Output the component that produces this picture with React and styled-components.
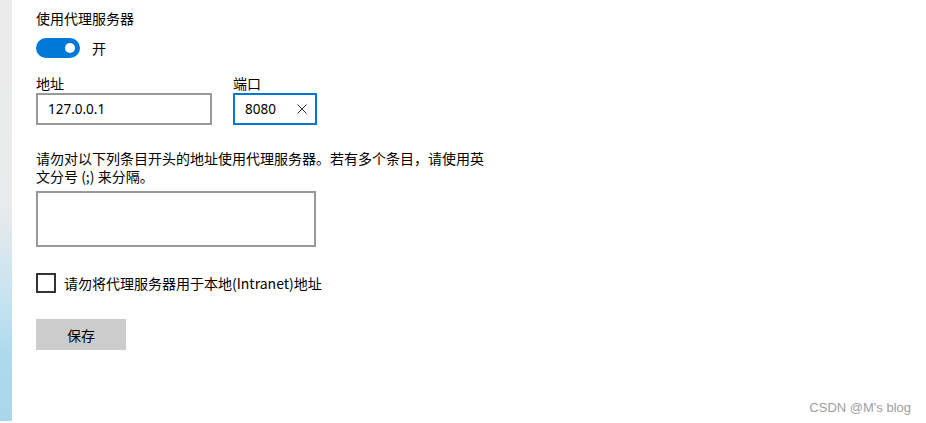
import React from 'react';
import styled, { createGlobalStyle } from 'styled-components';

const GlobalStyle = createGlobalStyle`
  html, body {
    margin: 0;
    padding: 0;
    background: #ffffff;
  }
  body {
    font-family: "Noto Sans CJK SC", "Microsoft YaHei", sans-serif;
    color: #000;
  }
`;

const Page = styled.div`
  position: relative;
  display: flex;
  width: 926px;
  height: 423px;
  overflow: hidden;
  background: #fff;
`;

const Strip = styled.div`
  width: 12px;
  height: 421px;
  flex-shrink: 0;
  background: linear-gradient(
    to bottom,
    #ebebeb 0%,
    #e8eaeb 50%,
    #c4e3f0 72%,
    #acd9ed 85%,
    #a8d7ec 100%
  );
`;

const Content = styled.div`
  display: flex;
  flex-direction: column;
  align-items: flex-start;
  padding: 8px 0 0 24px;
  font-size: 14px;
`;

const Title = styled.div`
  line-height: 20px;
`;

const ToggleRow = styled.div`
  display: flex;
  align-items: center;
  gap: 12px;
  margin-top: 10px;
  line-height: 20px;
`;

const Track = styled.div`
  display: flex;
  align-items: center;
  justify-content: ${(p) => (p.on ? 'flex-end' : 'flex-start')};
  width: 44px;
  height: 20px;
  box-sizing: border-box;
  padding: 0 5px;
  border-radius: 10px;
  background: ${(p) => (p.on ? '#0078d7' : '#fff')};
`;

const Knob = styled.div`
  width: 10px;
  height: 10px;
  border-radius: 50%;
  background: #fff;
`;

const FieldRow = styled.div`
  display: flex;
  gap: 21px;
  margin-top: 15px;
`;

const Field = styled.div`
  display: flex;
  flex-direction: column;
`;

const Label = styled.div`
  line-height: 20px;
`;

const InputBox = styled.div`
  display: flex;
  align-items: center;
  justify-content: space-between;
  box-sizing: border-box;
  width: ${(p) => p.w}px;
  height: 32px;
  padding: 0 10px;
  border: 2px solid ${(p) => (p.focused ? '#0078d7' : '#999999')};
  font-family: "Noto Sans", "Segoe UI", sans-serif;
  font-size: 13.5px;
  color: #000;
`;

const ClearIcon = styled.svg`
  width: 10px;
  height: 10px;
  margin-right: -2px;
`;

const Note = styled.p`
  width: 452px;
  margin: 24px 0 0;
  line-height: 18px;
  font-size: 14px;
`;

const TextArea = styled.div`
  box-sizing: border-box;
  width: 280px;
  height: 56px;
  margin-top: 6px;
  border: 2px solid #999999;
`;

const CheckRow = styled.label`
  display: flex;
  align-items: center;
  gap: 8px;
  margin-top: 26px;
  line-height: 20px;
`;

const Box = styled.span`
  box-sizing: border-box;
  width: 20px;
  height: 20px;
  border: 2px solid #333333;
`;

const Button = styled.button`
  width: 90px;
  height: 31px;
  margin-top: 26px;
  border: none;
  background: #cccccc;
  font-family: inherit;
  font-size: 14px;
  color: #000;
  padding: 0;
`;

const Watermark = styled.div`
  position: absolute;
  right: 15px;
  bottom: 8px;
  font-family: "Liberation Sans", Arial, sans-serif;
  font-size: 13px;
  color: #a0a0a0;
`;

export default function App() {
  return (
    <>
      <GlobalStyle />
      <Page>
        <Strip />
        <Content>
          <Title>使用代理服务器</Title>
          <ToggleRow>
            <Track on>
              <Knob />
            </Track>
            <span>开</span>
          </ToggleRow>
          <FieldRow>
            <Field>
              <Label>地址</Label>
              <InputBox w={176}>127.0.0.1</InputBox>
            </Field>
            <Field>
              <Label>端口</Label>
              <InputBox w={84} focused>
                <span>8080</span>
                <ClearIcon viewBox="0 0 10 10">
                  <path d="M0.5 0.5 L9.5 9.5 M9.5 0.5 L0.5 9.5" stroke="#333" strokeWidth="1" fill="none" />
                </ClearIcon>
              </InputBox>
            </Field>
          </FieldRow>
          <Note>
            请勿对以下列条目开头的地址使用代理服务器。若有多个条目，请使用英文分号 (;) 来分隔。
          </Note>
          <TextArea />
          <CheckRow>
            <Box />
            <span>请勿将代理服务器用于本地(Intranet)地址</span>
          </CheckRow>
          <Button>保存</Button>
        </Content>
        <Watermark>CSDN @M's blog</Watermark>
      </Page>
    </>
  );
}
